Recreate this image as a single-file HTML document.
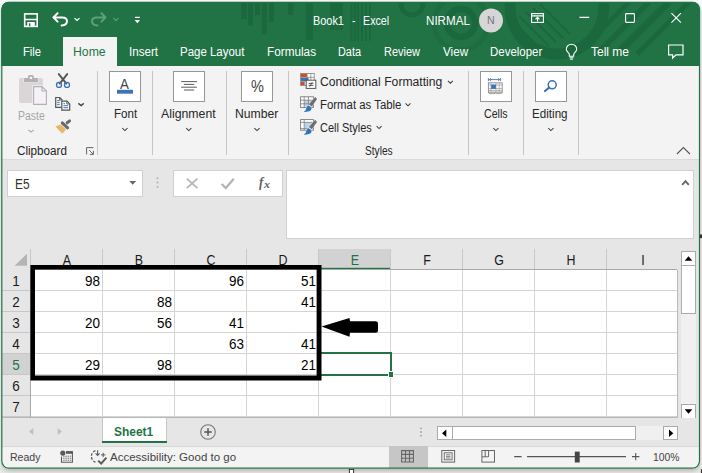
<!DOCTYPE html>
<html><head><meta charset="utf-8"><title>Book1 - Excel</title>
<style>
html,body{margin:0;padding:0;}
body{width:702px;height:473px;overflow:hidden;background:linear-gradient(#fbfbfb 0,#fbfbfb 460px,#e9e9e9 469px,#e9e9e9 473px);font-family:"Liberation Sans",sans-serif;position:relative;}
#win{position:absolute;left:0;top:0;width:702px;height:473px;clip-path:inset(1.9px 2px 4.4px 1.3px round 7.5px);}
#shadow{position:absolute;left:2px;top:3px;width:698px;height:466px;border-radius:8px;box-shadow:0 1px 4px 1px rgba(0,0,0,0.22);}
.a{position:absolute;}
.t{position:absolute;white-space:pre;transform-origin:0 0;}
svg{position:absolute;overflow:visible;}
.sep{position:absolute;width:1px;background:#c6c6c6;top:70.5px;height:84px;}
.box{position:absolute;top:71px;height:31px;width:32px;border:1px solid #979797;background:#fff;box-sizing:border-box;}
.gl{position:absolute;background:#d4d4d4;}
.num{position:absolute;font-size:14.8px;line-height:15px;color:#000;text-align:right;width:60px;transform:scaleX(0.91);transform-origin:100% 0;}
.rh{position:absolute;left:2px;width:28px;text-align:center;font-size:14.8px;line-height:15px;color:#1a1a1a;transform:scaleX(0.91);}
.ch{position:absolute;top:252.6px;width:72px;text-align:center;font-size:14.8px;line-height:15px;color:#1a1a1a;transform:scaleX(0.84);}

</style></head>
<body>
<div id="shadow"></div>
<div id="win">
  <!-- title + tabs -->
  <div class="a" style="left:0;top:0;width:702px;height:66px;background:#217346;"></div>
  <svg style="left:0;top:0" width="702" height="66"><rect x="241.2" y="0" width="5.5" height="19" fill="#1c683e"/><rect x="248" y="0" width="5.0" height="25.6" fill="#1c683e"/><rect x="255" y="0" width="5.0" height="15" fill="#1c683e"/><rect x="261.7" y="0" width="5.1" height="34" fill="#1c683e"/><rect x="269" y="0" width="5.0" height="22" fill="#1c683e"/><rect x="288" y="0" width="5.5" height="15" fill="#1c683e"/><rect x="305.7" y="0" width="7.1" height="40" fill="#1c683e"/><rect x="330" y="0" width="12.7" height="30" fill="#1c683e"/><rect x="350.6" y="0" width="1.8" height="41" fill="#1c683e"/><rect x="354" y="0" width="1.8" height="41" fill="#1c683e"/><rect x="357.2" y="0" width="1.8" height="41" fill="#1c683e"/><rect x="361" y="0" width="1.8" height="41" fill="#1c683e"/><rect x="365" y="0" width="1.8" height="41" fill="#1c683e"/><rect x="369" y="0" width="1.8" height="41" fill="#1c683e"/><circle cx="412" cy="4" r="11" fill="none" stroke="#1c683e" stroke-width="5"/><circle cx="461" cy="23" r="14" fill="none" stroke="#1c683e" stroke-width="6.5"/><circle cx="461" cy="23" r="27" fill="none" stroke="#1c683e" stroke-width="5" opacity="0.6"/><circle cx="557" cy="7" r="47" fill="none" stroke="#1c683e" stroke-width="11"/><path d="M512 20 L542 50" stroke="#1c683e" stroke-width="2" fill="none"/><path d="M519 16 L549 46" stroke="#1c683e" stroke-width="2" fill="none"/><path d="M526 12 L556 42" stroke="#1c683e" stroke-width="2" fill="none"/><path d="M533 8 L563 38" stroke="#1c683e" stroke-width="2" fill="none"/><path d="M540 4 L570 34" stroke="#1c683e" stroke-width="2" fill="none"/><path d="M629 2 L577 54" stroke="#1c683e" stroke-width="5" fill="none"/><path d="M649 2 L597 54" stroke="#1c683e" stroke-width="5.5" fill="none"/><path d="M669 2 L617 54" stroke="#1c683e" stroke-width="7" fill="none"/><path d="M689 2 L637 54" stroke="#1c683e" stroke-width="5" fill="none"/></svg>
  <div class="a" style="left:63px;top:37px;width:54px;height:30px;background:#f3f3f3;"></div>
  <!-- ribbon -->
  <div class="a" style="left:0;top:66px;width:702px;height:93px;background:#f3f3f3;"></div>

  <div class="sep" style="left:97px;"></div>
  <div class="sep" style="left:152px;"></div>
  <div class="sep" style="left:226px;"></div>
  <div class="sep" style="left:288px;"></div>
  <div class="sep" style="left:468px;"></div>
  <div class="sep" style="left:523px;"></div>
  <div class="sep" style="left:578px;"></div>
  <div class="box" style="left:109px;"></div>
  <div class="box" style="left:173px;"></div>
  <div class="box" style="left:241px;"></div>
  <div class="box" style="left:480px;"></div>
  <div class="box" style="left:535px;"></div>
  
  <!-- formula area -->
  <div class="a" style="left:0;top:159px;width:702px;height:259px;background:#e6e6e6;"></div>
  <div class="a" style="left:0;top:159px;width:702px;height:1px;background:#dbdbdb;"></div>
  <div class="a" style="left:7px;top:170px;width:136px;height:27px;background:#fff;border:1px solid #d0d0d0;box-sizing:border-box;"></div>
  <div class="a" style="left:173px;top:170px;width:110px;height:27px;background:#fff;border:1px solid #d0d0d0;box-sizing:border-box;"></div>
  <div class="a" style="left:286px;top:170px;width:408px;height:69px;background:#fff;border:1px solid #d0d0d0;box-sizing:border-box;"></div>
  <!-- grid -->
  <div class="a" style="left:31px;top:270px;width:646px;height:148px;background:#fff;"></div>
  <div class="a" style="left:319px;top:249px;width:72px;height:21px;background:#d2d2d2;"></div>
<svg style="left:0;top:0" width="702" height="473"><rect x="319" y="267.8" width="72" height="2" fill="#217346"/><rect x="28.6" y="354" width="1.7" height="20" fill="#217346"/></svg>
<div class="a" style="left:2px;top:354px;width:28px;height:20px;background:#d2d2d2;"></div>
<div class="a" style="left:30px;top:249px;width:1px;height:21px;background:#c8c8c8;"></div>
<div class="a" style="left:102px;top:249px;width:1px;height:21px;background:#c8c8c8;"></div>
<div class="a" style="left:174px;top:249px;width:1px;height:21px;background:#c8c8c8;"></div>
<div class="a" style="left:246px;top:249px;width:1px;height:21px;background:#c8c8c8;"></div>
<div class="a" style="left:318px;top:249px;width:1px;height:21px;background:#c8c8c8;"></div>
<div class="a" style="left:390px;top:249px;width:1px;height:21px;background:#c8c8c8;"></div>
<div class="a" style="left:462px;top:249px;width:1px;height:21px;background:#c8c8c8;"></div>
<div class="a" style="left:534px;top:249px;width:1px;height:21px;background:#c8c8c8;"></div>
<div class="a" style="left:606px;top:249px;width:1px;height:21px;background:#c8c8c8;"></div>
<div class="gl" style="left:102px;top:270px;width:1px;height:147px;"></div>
<div class="gl" style="left:174px;top:270px;width:1px;height:147px;"></div>
<div class="gl" style="left:246px;top:270px;width:1px;height:147px;"></div>
<div class="gl" style="left:318px;top:270px;width:1px;height:147px;"></div>
<div class="gl" style="left:390px;top:270px;width:1px;height:147px;"></div>
<div class="gl" style="left:462px;top:270px;width:1px;height:147px;"></div>
<div class="gl" style="left:534px;top:270px;width:1px;height:147px;"></div>
<div class="gl" style="left:606px;top:270px;width:1px;height:147px;"></div>
<div class="gl" style="left:31px;top:290px;width:646px;height:1px;"></div>
<div class="gl" style="left:31px;top:311px;width:646px;height:1px;"></div>
<div class="gl" style="left:31px;top:332px;width:646px;height:1px;"></div>
<div class="gl" style="left:31px;top:353px;width:646px;height:1px;"></div>
<div class="gl" style="left:31px;top:374px;width:646px;height:1px;"></div>
<div class="gl" style="left:31px;top:395px;width:646px;height:1px;"></div>
<div class="gl" style="left:31px;top:416px;width:646px;height:1px;"></div>
<div class="a" style="left:2px;top:290px;width:28px;height:1px;background:#c8c8c8;"></div>
<div class="a" style="left:2px;top:311px;width:28px;height:1px;background:#c8c8c8;"></div>
<div class="a" style="left:2px;top:332px;width:28px;height:1px;background:#c8c8c8;"></div>
<div class="a" style="left:2px;top:353px;width:28px;height:1px;background:#c8c8c8;"></div>
<div class="a" style="left:2px;top:374px;width:28px;height:1px;background:#c8c8c8;"></div>
<div class="a" style="left:2px;top:395px;width:28px;height:1px;background:#c8c8c8;"></div>
<div class="a" style="left:2px;top:416px;width:28px;height:1px;background:#c8c8c8;"></div>
<div class="a" style="left:30px;top:270px;width:1px;height:148px;background:#c8c8c8;"></div>
<div class="a" style="left:677px;top:270px;width:1px;height:148px;background:#b8b8b8;"></div>
<div class="a" style="left:2px;top:417px;width:676px;height:1px;background:#b8b8b8;"></div>
<div class="a" style="left:31px;top:269px;width:646px;height:1px;background:#a8a8a8;"></div>
<div class="a" style="left:30px;top:270px;width:1px;height:148px;background:#a8a8a8;"></div>
<div class="ch" style="left:31px;color:#1a1a1a;">A</div>
<div class="ch" style="left:103px;color:#1a1a1a;">B</div>
<div class="ch" style="left:175px;color:#1a1a1a;">C</div>
<div class="ch" style="left:247px;color:#1a1a1a;">D</div>
<div class="ch" style="left:319px;color:#217346;">E</div>
<div class="ch" style="left:391px;color:#1a1a1a;">F</div>
<div class="ch" style="left:463px;color:#1a1a1a;">G</div>
<div class="ch" style="left:535px;color:#1a1a1a;">H</div>
<div class="ch" style="left:607px;color:#1a1a1a;">I</div>
<div class="rh" style="top:273.6px;color:#1a1a1a;">1</div>
<div class="rh" style="top:294.6px;color:#1a1a1a;">2</div>
<div class="rh" style="top:315.6px;color:#1a1a1a;">3</div>
<div class="rh" style="top:336.6px;color:#1a1a1a;">4</div>
<div class="rh" style="top:357.6px;color:#217346;">5</div>
<div class="rh" style="top:378.6px;color:#1a1a1a;">6</div>
<div class="rh" style="top:399.6px;color:#1a1a1a;">7</div>
<div class="num" style="left:39.5px;top:273.6px;">98</div>
<div class="num" style="left:183.5px;top:273.6px;">96</div>
<div class="num" style="left:255.5px;top:273.6px;">51</div>
<div class="num" style="left:111.5px;top:294.6px;">88</div>
<div class="num" style="left:255.5px;top:294.6px;">41</div>
<div class="num" style="left:39.5px;top:315.6px;">20</div>
<div class="num" style="left:111.5px;top:315.6px;">56</div>
<div class="num" style="left:183.5px;top:315.6px;">41</div>
<div class="num" style="left:183.5px;top:336.6px;">63</div>
<div class="num" style="left:255.5px;top:336.6px;">41</div>
<div class="num" style="left:39.5px;top:357.6px;">29</div>
<div class="num" style="left:111.5px;top:357.6px;">98</div>
<div class="num" style="left:255.5px;top:357.6px;">21</div>
<div class="a" style="left:319px;top:351.5px;width:73px;height:24px;border:2px solid #217346;box-sizing:border-box;"></div>
<div class="a" style="left:387.5px;top:371.3px;width:6.5px;height:6.5px;background:#fff;"></div>
<div class="a" style="left:388.5px;top:372.3px;width:4.5px;height:4.5px;background:#217346;"></div>
<svg style="left:0;top:0" width="702" height="473"><path fill-rule="evenodd" d="M30.4 265.1 H321.5 V380.5 H30.4 Z M35 269.6 V375.4 H316.6 V269.6 Z" fill="#000"/></svg>
<svg style="left:0;top:0" width="702" height="473"><path d="M321.5 326.5 L349.5 318 L350 321.2 L375.5 321.2 Q378 321.2 378 323.7 L378 330.2 Q378 332.7 375.5 332.7 L350 332.7 L349.5 336.8 Z" fill="#000"/></svg>
  <!-- v scrollbar -->
  <div class="a" style="left:681px;top:251px;width:15px;height:168px;background:#f0f0f0;"></div>
  <div class="a" style="left:681px;top:251px;width:15px;height:15px;background:#fff;border:1px solid #ababab;box-sizing:border-box;"></div>
  <div class="a" style="left:681px;top:265px;width:15px;height:48.5px;background:#fff;border:1px solid #ababab;box-sizing:border-box;"></div>
  <div class="a" style="left:681px;top:404px;width:15px;height:14.5px;background:#fff;border:1px solid #ababab;box-sizing:border-box;"></div>
  <svg style="left:681px;top:251px" width="15" height="15"><path d="M3.7 9.7 L7.5 5.3 L11.3 9.7 Z" fill="#000"/></svg>
  <svg style="left:681px;top:404px" width="15" height="15"><path d="M3.7 5.3 L7.5 9.7 L11.3 5.3 Z" fill="#000"/></svg>
  <!-- tab bar -->
  <div class="a" style="left:0;top:418px;width:702px;height:28px;background:#e6e6e6;"></div>
  <div class="a" style="left:102px;top:418px;width:65px;height:23px;background:#fff;border-left:1px solid #c6c6c6;border-right:1px solid #c6c6c6;box-sizing:border-box;"></div>
  <div class="a" style="left:102px;top:441px;width:65px;height:2px;background:#217346;"></div>
  <svg style="left:0;top:0" width="702" height="473">
    <path d="M33.3 428 L29 431.5 L33.3 435 Z" fill="#c0c0c0"/>
    <path d="M57.7 428 L62 431.5 L57.7 435 Z" fill="#c0c0c0"/>
    <circle cx="208" cy="432" r="7.3" fill="none" stroke="#777" stroke-width="1.1"/>
    <path d="M204.2 432 H211.8 M208 428.2 V435.8" stroke="#555" stroke-width="1.5" fill="none"/>
    <circle cx="421" cy="428.3" r="0.9" fill="#a0a0a0"/><circle cx="421" cy="432" r="0.9" fill="#a0a0a0"/><circle cx="421" cy="435.7" r="0.9" fill="#a0a0a0"/>
  </svg>
  <!-- h scrollbar -->
  <div class="a" style="left:437px;top:425.5px;width:241px;height:14.5px;background:#f0f0f0;"></div>
  <div class="a" style="left:437px;top:425.5px;width:15.5px;height:14.5px;background:#fff;border:1px solid #ababab;box-sizing:border-box;"></div>
  <div class="a" style="left:451.5px;top:425.5px;width:184.5px;height:14.5px;background:#fff;border:1px solid #ababab;box-sizing:border-box;"></div>
  <div class="a" style="left:663px;top:425.5px;width:15px;height:14.5px;background:#fff;border:1px solid #ababab;box-sizing:border-box;"></div>
  <svg style="left:437px;top:425.5px" width="15" height="15"><path d="M9.3 3.5 L5 7.2 L9.3 10.9 Z" fill="#000"/></svg>
  <svg style="left:663px;top:425.5px" width="15" height="15"><path d="M6 3.5 L10.3 7.2 L6 10.9 Z" fill="#000"/></svg>
  <!-- status -->
  <div class="a" style="left:0;top:446px;width:702px;height:27px;background:#f3f3f3;"></div>
  <div class="a" style="left:0;top:446px;width:702px;height:1px;background:#d8d8d8;"></div>
  <div class="a" style="left:388.5px;top:446px;width:39.5px;height:22px;background:#c6c6c6;"></div>
  <svg style="left:0;top:0" width="702" height="473"><rect x="24.7" y="13.9" width="12.5" height="12.5" fill="none" stroke="#fff" stroke-width="1.6"/><path d="M24.7 19.5 H37.2" stroke="#fff" stroke-width="1.6"/><rect x="27.2" y="22" width="7.6" height="5" fill="#fff"/><rect x="28.9" y="23.3" width="1.5" height="3.0" fill="#217346"/><path d="M57.6 13.2 L53.4 17.4 L57.6 21.6 M53.6 17.4 H62.2 Q67 17.4 67 21.2 Q67 25 61.6 25.4" fill="none" stroke="#fff" stroke-width="2" stroke-linecap="round" stroke-linejoin="round"/><path d="M74.5 18.1 L77.0 20.5 L79.5 18.1" fill="none" stroke="#fff" stroke-width="1.2"/><path d="M101.4 13.2 L105.6 17.4 L101.4 21.6 M105.4 17.4 H96.8 Q92 17.4 92 21.2 Q92 25 97.4 25.4" fill="none" stroke="#5f9f7e" stroke-width="2" stroke-linecap="round" stroke-linejoin="round"/><path d="M113.4 18.1 L115.9 20.5 L118.4 18.1" fill="none" stroke="#5f9f7e" stroke-width="1.2"/><rect x="134.9" y="16.8" width="4.9" height="1.2" fill="#fff"/><path d="M134.7 19.9 H140 L137.35 23.2 Z" fill="#fff"/><circle cx="491" cy="20.5" r="12" fill="#d6d6d6"/><rect x="531.6" y="13.6" width="11.8" height="8.8" fill="none" stroke="#fff" stroke-width="1.1"/><path d="M531.6 15.9 H543.4" stroke="#fff" stroke-width="1.1"/><path d="M537.5 21.4 V17.6 M535.5 19.4 L537.5 17.4 L539.5 19.4" fill="none" stroke="#fff" stroke-width="1.1"/><path d="M579.5 17.4 H589.2" stroke="#fff" stroke-width="1.1"/><rect x="625.6" y="13.6" width="8.8" height="8.8" rx="0.8" fill="none" stroke="#fff" stroke-width="1.1"/><path d="M671.4 13.2 L680.9 22.7 M680.9 13.2 L671.4 22.7" stroke="#fff" stroke-width="1.1"/><path d="M569.3 56.2 V54.6 Q569.3 53.6 568 52.3 Q566.3 50.6 566.3 49.4 A5.2 5.2 0 0 1 576.7 49.4 Q576.7 50.6 575 52.3 Q573.7 53.6 573.7 54.6 V56.2 Z" fill="none" stroke="#fff" stroke-width="1.1" stroke-linejoin="round"/><path d="M569.6 57.7 H573.4 M570.2 59.3 H572.8" stroke="#fff" stroke-width="1.1"/><path d="M668.6 45 H683 V54.8 H676 L672.6 58 V54.8 H668.6 Z" fill="none" stroke="#fff" stroke-width="1.2" stroke-linejoin="miter"/><rect x="19" y="78" width="23.9" height="24.9" rx="1.6" fill="#dad6d8"/><path d="M24 82.2 V79 Q24 78 25 78 H28 V76.6 Q28 75 29.6 75 H32.2 Q33.8 75 33.8 76.6 V78 H36.9 Q37.9 78 37.9 79 V82.2 Z" fill="#b2b2b2" stroke="#f3f3f3" stroke-width="1" paint-order="stroke"/><rect x="29.8" y="76.8" width="2.3" height="2.2" fill="#f6f6f6"/><path d="M33.6 86.6 H42 L46.4 91 V104.4 H33.6 Z" fill="#f5f1f6" stroke="#f3f3f3" stroke-width="2.6"/><path d="M33.6 86.6 H42 L46.4 91 V104.4 H33.6 Z" fill="#f5f1f6" stroke="#b3b0b3" stroke-width="1.1"/><path d="M42 86.6 V91 H46.4" fill="none" stroke="#b3b0b3" stroke-width="1.1"/><path d="M28.3 129.8 L31.0 132.1 L33.7 129.8" fill="none" stroke="#a6a6a6" stroke-width="1.1"/><path d="M58.8 74.1 L66.3 83.6 M67.2 74.1 L59.7 83.6" stroke="#555" stroke-width="1.9" fill="none" stroke-linecap="round"/><circle cx="59" cy="84.9" r="2.5" fill="none" stroke="#3a70b7" stroke-width="1.3"/><circle cx="67" cy="84.9" r="2.5" fill="none" stroke="#3a70b7" stroke-width="1.3"/><path d="M61 107.4 H55.7 V97.5 H59.8 L62 99.7 V100.4" fill="none" stroke="#555" stroke-width="1.2"/><path d="M59.6 97.5 V99.9 H62" fill="none" stroke="#555" stroke-width="0.9"/><path d="M61.8 101.2 H67 L69.7 103.9 V110.1 H61.8 Z" fill="#fff" stroke="#555" stroke-width="1.2"/><path d="M66.8 101.2 V104 H69.7" fill="none" stroke="#555" stroke-width="0.9"/><path d="M57.2 100.6 H59.6 M57.2 102.6 H59.6 M57.2 104.6 H59.6" stroke="#3a78c8" stroke-width="1"/><path d="M63.4 103.7 H65 M63.4 105.7 H68 M63.4 107.7 H68" stroke="#3a78c8" stroke-width="1"/><path d="M78.4 103.4 L81.1 105.6 L83.8 103.4" fill="none" stroke="#444" stroke-width="1.4"/><path d="M55.4 126.5 L60.4 124.4 L66.1 129.6 L62.2 133.7 Z" fill="#e8b76a"/><path d="M62.3 123 L67.6 127.8" stroke="#6a6a6a" stroke-width="3.1" stroke-linecap="round" fill="none"/><path d="M67.2 122.8 L69.6 120.9" stroke="#6a6a6a" stroke-width="3" stroke-linecap="round" fill="none"/><path d="M86.6 154.4 V147.6 H93.4" fill="none" stroke="#666" stroke-width="1"/><path d="M89.2 150.2 L93.2 154.2 M93.4 150.8 V154.4 H89.8" fill="none" stroke="#666" stroke-width="1"/><rect x="117" y="89.8" width="16" height="3.9" fill="#3b73b9"/><path d="M181.2 81.6 H196.9 M183.9 84.4 H194.2 M181.2 87.2 H196.9 M183.9 90 H194.2" stroke="#5a5a5a" stroke-width="1"/><path d="M122.3 128.2 L124.9 130.6 L127.5 128.2" fill="none" stroke="#444" stroke-width="1.1"/><path d="M186.2 128.2 L188.8 130.6 L191.4 128.2" fill="none" stroke="#444" stroke-width="1.1"/><path d="M254.4 128.2 L257.0 130.6 L259.6 128.2" fill="none" stroke="#444" stroke-width="1.1"/><path d="M493.3 128.2 L495.9 130.6 L498.5 128.2" fill="none" stroke="#444" stroke-width="1.1"/><path d="M548.3 128.2 L550.9 130.6 L553.5 128.2" fill="none" stroke="#444" stroke-width="1.1"/><rect x="300.6" y="73.5" width="13.6" height="12" fill="#fff" stroke="#8a8a8a" stroke-width="0.9"/><path d="M307.2 73.5 V85.5 M310.8 73.5 V80 M300.6 77.4 H314.2 M300.6 81.4 H306" stroke="#8a8a8a" stroke-width="0.8"/><rect x="300.9" y="73.8" width="6" height="3.2" fill="#d14b2a"/><rect x="300.9" y="77.8" width="7.6" height="3.2" fill="#3b73b9"/><rect x="300.9" y="81.8" width="3.8" height="3.4" fill="#d14b2a"/><rect x="306.2" y="80.2" width="9.6" height="8.2" fill="#fff" stroke="#555" stroke-width="1"/><path d="M308.6 83.4 H313.4 M308.6 85.4 H313.4 M312.2 82.2 L309.8 86.6" stroke="#333" stroke-width="0.8"/><rect x="300.6" y="96.8" width="12.8" height="10.6" fill="#fff" stroke="#7a7a7a" stroke-width="0.9"/><rect x="304.4" y="100.4" width="8.6" height="6.6" fill="#bcd3ec"/><path d="M304.2 96.8 V107.4 M308.4 96.8 V107.4 M300.6 100.2 H313.4 M300.6 103.8 H313.4" stroke="#7a7a7a" stroke-width="0.8"/><path d="M315.2 97.0 L317 99.10000000000001 L311.9 106.4 L308.9 104.2 Z" fill="#6e6e6e" stroke="#f3f3f3" stroke-width="0.8" paint-order="stroke"/><path d="M308.5 105.4 L311.5 107.4 Q312 110.8 308 111.5 Q305 112.10000000000001 303.8 111.8 Q306.4 110.4 306.2 108.4 Q306.4 106.4 308.5 105.4 Z" fill="#2f74c0" stroke="#f3f3f3" stroke-width="0.8" paint-order="stroke"/><rect x="300.6" y="119.6" width="12.8" height="10.6" fill="#fff" stroke="#7a7a7a" stroke-width="0.9"/><rect x="304.4" y="122.6" width="8.6" height="6" fill="#bcd3ec"/><path d="M304.2 119.6 V130.2 M300.6 122.4 H313.4 M300.6 128.6 H309" stroke="#7a7a7a" stroke-width="0.8"/><path d="M315.2 119.8 L317 121.9 L311.9 129.2 L308.9 127 Z" fill="#6e6e6e" stroke="#f3f3f3" stroke-width="0.8" paint-order="stroke"/><path d="M308.5 128.2 L311.5 130.2 Q312 133.6 308 134.3 Q305 134.9 303.8 134.6 Q306.4 133.2 306.2 131.2 Q306.4 129.2 308.5 128.2 Z" fill="#2f74c0" stroke="#f3f3f3" stroke-width="0.8" paint-order="stroke"/><path d="M447.9 80.8 L450.4 83.2 L452.9 80.8" fill="none" stroke="#444" stroke-width="1.1"/><path d="M405.5 103.4 L408.0 105.8 L410.5 103.4" fill="none" stroke="#444" stroke-width="1.1"/><path d="M376.6 126.2 L379.1 128.6 L381.6 126.2" fill="none" stroke="#444" stroke-width="1.1"/><path d="M488.4 78.1 V81.1 M500.6 78.1 V81.1 M489 79.6 H500 M490.8 78.4 L489.4 79.6 L490.8 80.8 M498.2 78.4 L499.6 79.6 L498.2 80.8" stroke="#3b73b9" stroke-width="0.9" fill="none"/><rect x="488.4" y="82.8" width="13.8" height="9.4" fill="#fff" stroke="#8a8a8a" stroke-width="0.9"/><path d="M491 82.8 V92.2 M496 82.8 V92.2 M499.2 82.8 V92.2 M488.4 85 H502.2 M488.4 88.6 H502.2 M488.4 90.6 H502.2" stroke="#9a9a9a" stroke-width="0.7"/><rect x="491.2" y="84.6" width="4.7" height="4.3" fill="#3b73b9"/><path d="M488.4 92.2 Q488.4 93.6 490 93.6 H494 Q495.3 93.6 495.3 92.6 Q495.3 93.6 496.6 93.6 H500.6 Q502.2 93.6 502.2 92.2" fill="none" stroke="#8a8a8a" stroke-width="0.8"/><circle cx="552.2" cy="84.8" r="4" fill="none" stroke="#3b73b9" stroke-width="1.5"/><path d="M549.2 87.6 L545 91" stroke="#3b73b9" stroke-width="2.2" stroke-linecap="round"/><path d="M676.9 154 L683.4 147.5 L689.9 154" fill="none" stroke="#555" stroke-width="1.1"/><path d="M129.2 181.1 H136.2 L132.7 184.7 Z" fill="#666"/><rect x="156.7" y="177.39999999999998" width="1.6" height="1.6" fill="#ababab"/><rect x="156.7" y="181.7" width="1.6" height="1.6" fill="#ababab"/><rect x="156.7" y="186.1" width="1.6" height="1.6" fill="#ababab"/><path d="M186.8 178.7 L197.4 188.2 M197.4 178.7 L186.8 188.2" stroke="#b4b4b4" stroke-width="1.7"/><path d="M221.6 184 L225.8 188 L233.8 178.8" fill="none" stroke="#b4b4b4" stroke-width="2.3"/><path d="M682.2 184.8 L685.5 181.2 L688.8 184.8" fill="none" stroke="#666" stroke-width="1.9"/><path d="M27 253.8 V265.8 H14.6 Z" fill="#b4b4b4"/><circle cx="62.8" cy="453.1" r="2.6" fill="#5a5a5a"/><path d="M66 451.7 H72.4 V462.2 H61.5 V456.4" fill="none" stroke="#5a5a5a" stroke-width="1.1"/><rect x="66" y="451.2" width="6.9" height="2.6" fill="#5a5a5a"/><path d="M63.2 456.2 H71" stroke="#5a5a5a" stroke-width="0.9" stroke-dasharray="1.4 0.8"/><path d="M63.2 458.2 H71" stroke="#5a5a5a" stroke-width="0.9" stroke-dasharray="1.4 0.8"/><path d="M63.2 460.2 H71" stroke="#5a5a5a" stroke-width="0.9" stroke-dasharray="1.4 0.8"/><path d="M95.4 450.6 A6.2 6.2 0 0 0 96 462.4" fill="none" stroke="#5a5a5a" stroke-width="1.3" stroke-dasharray="2.6 1.5"/><path d="M97.6 450.2 V455.2 M95.6 453.4 L97.6 455.4 L99.6 453.4" fill="none" stroke="#5a5a5a" stroke-width="1.1"/><path d="M101 454.9 H105.4 M103.2 452.7 V457.1" stroke="#5a5a5a" stroke-width="1"/><path d="M98.2 460.6 L101.2 463.6 L106.4 457.6" fill="none" stroke="#5a5a5a" stroke-width="2"/><path d="M401.6 450.6 H413.4 V462 H401.6 Z M405.5 450.6 V462 M409.5 450.6 V462 M401.6 454.4 H413.4 M401.6 458.2 H413.4" fill="none" stroke="#666" stroke-width="1.1"/><rect x="441.8" y="450.5" width="12.8" height="11.6" fill="none" stroke="#666" stroke-width="1"/><rect x="444.3" y="452.8" width="7.8" height="7" fill="none" stroke="#666" stroke-width="0.9"/><path d="M446 454.8 H450.4 M446 456.4 H450.4 M446 458 H450.4" stroke="#666" stroke-width="0.8"/><rect x="481.9" y="450.5" width="12.6" height="11.6" fill="none" stroke="#666" stroke-width="1"/><path d="M485.2 450.5 V456.8 M488.6 450.5 V456.8 M481.9 456.8 H488.6" fill="none" stroke="#666" stroke-width="1"/><path d="M514.2 456.6 H521.6" stroke="#555" stroke-width="1.1"/><path d="M527 456.6 H626" stroke="#555" stroke-width="1.2"/><rect x="574.8" y="451.6" width="4.9" height="10.9" fill="#444"/><path d="M632 456.6 H639.4 M635.7 452.9 V460.3" stroke="#555" stroke-width="1.1"/></svg>
<div class="t" style="left:312.5px;top:15.1px;font-size:12px;line-height:12px;color:#fff;transform:scaleX(0.909);">Book1</div>
<div class="t" style="left:351.6px;top:15.1px;font-size:12px;line-height:12px;color:#fff;transform:scaleX(0.850);">-</div>
<div class="t" style="left:362.7px;top:15.1px;font-size:12px;line-height:12px;color:#fff;transform:scaleX(0.893);">Excel</div>
<div class="t" style="left:426.0px;top:15.1px;font-size:12px;line-height:12px;color:#fff;transform:scaleX(0.967);">NIRMAL</div>
<div class="t" style="left:487.2px;top:15.2px;font-size:11.5px;line-height:11.5px;color:#75757f;transform:scaleX(0.925);">N</div>
<div class="t" style="left:22.5px;top:46.1px;font-size:12px;line-height:12px;color:#fff;transform:scaleX(0.937);">File</div>
<div class="t" style="left:73.4px;top:46.1px;font-size:12px;line-height:12px;color:#217346;transform:scaleX(1.019);">Home</div>
<div class="t" style="left:129.0px;top:46.1px;font-size:12px;line-height:12px;color:#fff;transform:scaleX(0.967);">Insert</div>
<div class="t" style="left:180.0px;top:46.1px;font-size:12px;line-height:12px;color:#fff;transform:scaleX(0.956);">Page Layout</div>
<div class="t" style="left:267.0px;top:46.1px;font-size:12px;line-height:12px;color:#fff;transform:scaleX(0.980);">Formulas</div>
<div class="t" style="left:338.2px;top:46.1px;font-size:12px;line-height:12px;color:#fff;transform:scaleX(0.908);">Data</div>
<div class="t" style="left:384.4px;top:46.1px;font-size:12px;line-height:12px;color:#fff;transform:scaleX(0.915);">Review</div>
<div class="t" style="left:442.8px;top:46.1px;font-size:12px;line-height:12px;color:#fff;transform:scaleX(0.973);">View</div>
<div class="t" style="left:490.3px;top:46.1px;font-size:12px;line-height:12px;color:#fff;transform:scaleX(0.955);">Developer</div>
<div class="t" style="left:591.0px;top:46.1px;font-size:12px;line-height:12px;color:#fff;transform:scaleX(1.000);">Tell me</div>
<div class="t" style="left:18.0px;top:110.1px;font-size:12px;line-height:12px;color:#a6a6a6;transform:scaleX(0.871);">Paste</div>
<div class="t" style="left:16.7px;top:145.1px;font-size:12px;line-height:12px;color:#262626;transform:scaleX(0.973);">Clipboard</div>
<div class="t" style="left:113.5px;top:108.1px;font-size:12px;line-height:12px;color:#262626;transform:scaleX(0.967);">Font</div>
<div class="t" style="left:161.4px;top:108.1px;font-size:12px;line-height:12px;color:#262626;transform:scaleX(1.024);">Alignment</div>
<div class="t" style="left:235.3px;top:108.1px;font-size:12px;line-height:12px;color:#262626;transform:scaleX(1.016);">Number</div>
<div class="t" style="left:319.6px;top:76.1px;font-size:12px;line-height:12px;color:#262626;transform:scaleX(1.013);">Conditional Formatting</div>
<div class="t" style="left:319.6px;top:99.1px;font-size:12px;line-height:12px;color:#262626;transform:scaleX(0.949);">Format as Table</div>
<div class="t" style="left:319.6px;top:122.1px;font-size:12px;line-height:12px;color:#262626;transform:scaleX(0.914);">Cell Styles</div>
<div class="t" style="left:364.5px;top:145.1px;font-size:12px;line-height:12px;color:#262626;transform:scaleX(0.845);">Styles</div>
<div class="t" style="left:483.9px;top:108.1px;font-size:12px;line-height:12px;color:#262626;transform:scaleX(0.885);">Cells</div>
<div class="t" style="left:532.4px;top:108.1px;font-size:12px;line-height:12px;color:#262626;transform:scaleX(0.970);">Editing</div>
<div class="t" style="left:120.3px;top:76.6px;font-size:14px;line-height:14px;color:#444;transform:scaleX(0.950);">A</div>
<div class="t" style="left:251.0px;top:78.8px;font-size:16px;line-height:16px;color:#444;transform:scaleX(0.907);">%</div>
<div class="t" style="left:258.5px;top:174.9px;font-size:15px;line-height:15px;color:#636363;transform:scaleX(0.857);font-family:'Liberation Serif',serif;font-style:italic;font-weight:bold;">f</div>
<div class="t" style="left:264.0px;top:179.7px;font-size:10.5px;line-height:10.5px;color:#636363;transform:scaleX(1.150);font-family:'Liberation Serif',serif;font-style:italic;font-weight:bold;">x</div>
<div class="t" style="left:14.6px;top:177.1px;font-size:14.4px;line-height:14.4px;color:#333;transform:scaleX(0.828);">E5</div>
<div class="t" style="left:10.3px;top:452.0px;font-size:11px;line-height:11px;color:#444;transform:scaleX(0.959);">Ready</div>
<div class="t" style="left:110.3px;top:452.0px;font-size:11px;line-height:11px;color:#444;transform:scaleX(1.047);">Accessibility: Good to go</div>
<div class="t" style="left:652.9px;top:452.0px;font-size:11px;line-height:11px;color:#444;transform:scaleX(0.941);">100%</div>
<div class="t" style="left:114.4px;top:424.8px;font-size:13px;line-height:13px;color:#217346;transform:scaleX(0.919);font-weight:bold;">Sheet1</div>
</div>
<svg style="left:0;top:0" width="702" height="473"><rect x="1.8" y="2.4" width="697.7" height="465.7" rx="7" fill="none" stroke="#217346" stroke-width="1.2"/><rect x="699.7" y="234.5" width="2.3" height="3.6" fill="#333"/><rect x="349.4" y="469.4" width="4.2" height="5" fill="#fff" stroke="#333" stroke-width="1"/><rect x="700.9" y="469.2" width="2" height="4" fill="#333"/></svg>

</body></html>
